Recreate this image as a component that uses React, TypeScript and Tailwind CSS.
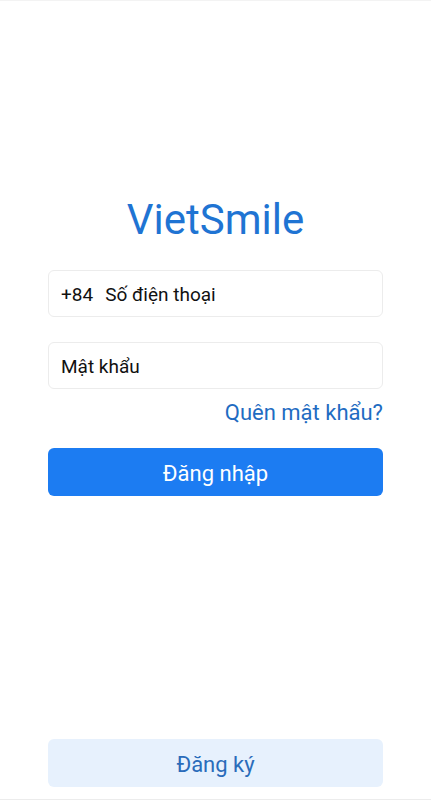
export default function App() {
	return (
		<div className="flex h-[800px] w-full flex-col bg-white font-['Roboto',sans-serif]">
			<div className="h-px w-full shrink-0 bg-[#f3f3f3]" />
			<div className="flex flex-1 flex-col px-12">
				<h1 className="mt-[194px] text-center text-[42px] font-normal leading-[50px] text-[#1f74d3]">
					VietSmile
				</h1>
				<div className="mt-[25px] flex h-[47px] items-center gap-[12px] rounded-md border border-[#ececec] px-[12px] pt-[3px] text-[19px] text-[#111]">
					<span>+84</span>
					<span>Số điện thoại</span>
				</div>
				<div className="mt-[25px] flex h-[47px] items-center rounded-md border border-[#ececec] px-[12px] pt-[3px] text-[19px] text-[#111]">
					Mật khẩu
				</div>
				<div className="mt-[11px] text-right text-[22px] leading-[26px] text-[#1f6cc2]">
					Quên mật khẩu?
				</div>
				<button className="mt-[22px] flex h-12 w-full items-center justify-center rounded-md bg-[#1c7cf2] pt-[3px] text-[22px] text-white">
					Đăng nhập
				</button>
				<div className="flex-1" />
				<button className="mb-3 flex h-12 w-full items-center justify-center rounded-md bg-[#e7f1fd] pt-[3px] text-[22px] text-[#2a6cba]">
					Đăng ký
				</button>
			</div>
			<div className="h-px w-full shrink-0 bg-[#ececec]" />
		</div>
	);
}
